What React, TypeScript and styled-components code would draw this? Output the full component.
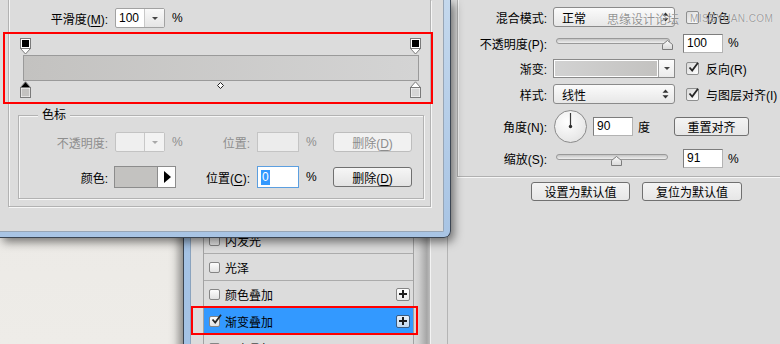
import React from "react"
import styled, { createGlobalStyle } from "styled-components"

const GlobalStyle = createGlobalStyle`
  html, body {
    margin: 0;
    padding: 0;
  }
  body {
    font-family: "Liberation Sans", "Noto Sans CJK SC", sans-serif;
    font-size: 12px;
    color: #000;
  }
  * {
    box-sizing: border-box;
  }
`

const styleItems = [
  { name: "样式" },
  { name: "混合选项:默认" },
  { name: "斜面和浮雕", box: true },
  { name: "等高线", box: true },
  { name: "纹理", box: true },
  { name: "描边", box: true, plus: true },
  { name: "内阴影", box: true, plus: true },
  { name: "内发光", box: true },
  { name: "光泽", box: true },
  { name: "颜色叠加", box: true, plus: true },
  { name: "渐变叠加", box: true, plus: true, checked: true, active: true },
  { name: "图案叠加", box: true },
  { name: "外发光", box: true },
  { name: "投影", box: true, plus: true },
]

const opacityStops = [{ at: 0 }, { at: 1 }]
const colorStops = [
  { at: 0, color: "#c3c2c0", selected: true },
  { at: 1, color: "#d6d6d6", selected: false },
]

const CheckGlyph = () => (
  <svg width="13" height="13" viewBox="0 0 13 13">
    <path d="M2.5 6.5 L5.2 9.6 L11 1.8" fill="none" stroke="#262626" strokeWidth="1.8" />
  </svg>
)

const PlusGlyph = () => (
  <svg width="8" height="8" viewBox="0 0 8 8">
    <path d="M4 0 V8 M0 4 H8" stroke="#1e1e1e" strokeWidth="2" />
  </svg>
)

const UpDown = () => (
  <svg width="7" height="10" viewBox="0 0 7 10">
    <path d="M3.5 0.5 L6.5 3.8 H0.5 Z M3.5 9.5 L6.5 6.2 H0.5 Z" fill="#333" />
  </svg>
)

const SliderThumb = ({ left }: { left: number }) => (
  <Thumb style={{ left }} width="11" height="10" viewBox="0 0 11 10">
    <defs>
      <linearGradient id="thumbFill" x1="0" y1="0" x2="0" y2="1">
        <stop offset="0" stopColor="#fafafa" />
        <stop offset="1" stopColor="#d8d8d8" />
      </linearGradient>
    </defs>
    <path d="M0.5 9.5 V4.5 L5.5 0.5 L10.5 4.5 V9.5 Z" fill="url(#thumbFill)" stroke="#7c7c7c" />
  </Thumb>
)

const AngleDial = () => (
  <svg width="33" height="33" viewBox="0 0 33 33">
    <defs>
      <radialGradient id="dialFill" cx="0.4" cy="0.35" r="0.7">
        <stop offset="0" stopColor="#ffffff" />
        <stop offset="1" stopColor="#e4e4e4" />
      </radialGradient>
    </defs>
    <circle cx="16.5" cy="16.5" r="16" fill="url(#dialFill)" stroke="#8a8a8a" />
    <path d="M16.5 16.5 V3" stroke="#3a3a3a" strokeWidth="1.2" />
    <circle cx="16.5" cy="16.5" r="1.7" fill="#2e2e2e" />
  </svg>
)

export default function App() {
  return (
    <>
      <GlobalStyle />
      <Desktop>
        <BackWindow>
          <BackContent>
            <StyleColumn>
              <StyleList>
                {styleItems.map(item => (
                  <StyleItem key={item.name} $active={item.active}>
                    {item.box && <ListCheck>{item.checked && <CheckGlyph />}</ListCheck>}
                    <span>{item.name}</span>
                    {item.plus && (
                      <PlusButton $active={item.active}>
                        <PlusGlyph />
                      </PlusButton>
                    )}
                  </StyleItem>
                ))}
              </StyleList>
              <Splitter />
            </StyleColumn>

            <RightPane>
              <SettingsGroup>
                <SettingsRow $h={20}>
                  <SetLabel>混合模式:</SetLabel>
                  <Select $ml={6}>
                    <span>正常</span>
                    <UpDown />
                  </Select>
                  <CheckItem $ml={11}>
                    <CheckBox />
                    <span>仿色</span>
                  </CheckItem>
                </SettingsRow>

                <SettingsRow $h={20}>
                  <SetLabel>不透明度(P):</SetLabel>
                  <Slider $ml={9} $w={114}>
                    <SliderThumb left={105} />
                  </Slider>
                  <NumberInput $ml={13}>100</NumberInput>
                  <UnitText $ml={5}>%</UnitText>
                </SettingsRow>

                <SettingsRow $h={19}>
                  <SetLabel>渐变:</SetLabel>
                  <GradientPick>
                    <GradientSwatch />
                    <DropPart />
                  </GradientPick>
                  <CheckItem $ml={11}>
                    <CheckBox>
                      <CheckGlyph />
                    </CheckBox>
                    <span>反向(R)</span>
                  </CheckItem>
                </SettingsRow>

                <SettingsRow $h={20}>
                  <SetLabel>样式:</SetLabel>
                  <Select $ml={6}>
                    <span>线性</span>
                    <UpDown />
                  </Select>
                  <CheckItem $ml={11}>
                    <CheckBox>
                      <CheckGlyph />
                    </CheckBox>
                    <span>与图层对齐(I)</span>
                  </CheckItem>
                </SettingsRow>

                <SettingsRow $h={32}>
                  <SetLabel>角度(N):</SetLabel>
                  <DialBox>
                    <AngleDial />
                  </DialBox>
                  <NumberInput $ml={6}>90</NumberInput>
                  <UnitText $ml={5}>度</UnitText>
                  <PanelButton $ml={24} $w={75}>
                    重置对齐
                  </PanelButton>
                </SettingsRow>

                <SettingsRow $h={21}>
                  <SetLabel>缩放(S):</SetLabel>
                  <Slider $ml={9} $w={112}>
                    <SliderThumb left={54} />
                  </Slider>
                  <NumberInput $ml={15}>91</NumberInput>
                  <UnitText $ml={5}>%</UnitText>
                </SettingsRow>
              </SettingsGroup>

              <ButtonsRow>
                <PanelButton $w={99}>设置为默认值</PanelButton>
                <PanelButton $w={100}>复位为默认值</PanelButton>
              </ButtonsRow>
            </RightPane>
          </BackContent>
        </BackWindow>

        <FrontFrame>
          <DialogBody>
            <EtchedFrame>
              <SmoothRow>
                <SmoothLabel>
                  平滑度(<u>M</u>):
                </SmoothLabel>
                <Combo>
                  <ComboValue>100</ComboValue>
                  <ComboArrow />
                </Combo>
                <FieldUnit>%</FieldUnit>
              </SmoothRow>

              <GradientEditor>
                <StopRow>
                  {opacityStops.map(s => (
                    <StopMark key={s.at} style={{ left: s.at * 390 - 3 }} width="11" height="17" viewBox="0 0 11 17">
                      <path d="M0.5 10.5 L5.5 16 L10.5 10.5 Z" fill="#fff" stroke="#7a7a7a" />
                      <rect x="0.5" y="0.5" width="10" height="10" fill="#fff" stroke="#7a7a7a" />
                      <rect x="2" y="2" width="7" height="7" fill="#000" />
                    </StopMark>
                  ))}
                </StopRow>
                <GradientBar />
                <StopRow>
                  {colorStops.map(s => (
                    <StopMark key={s.at} style={{ left: s.at * 390 - 3 }} width="11" height="17" viewBox="0 0 11 17">
                      <path d="M0.5 6.5 L5.5 0.8 L10.5 6.5 Z" fill={s.selected ? "#000" : "#fff"} stroke="#7a7a7a" />
                      <rect x="0.5" y="6.5" width="10" height="10" fill="#fff" stroke="#7a7a7a" />
                      <rect x="1.5" y="7.5" width="8" height="8" fill={s.color} />
                    </StopMark>
                  ))}
                  <StopMark style={{ left: 194, top: 1 }} width="7" height="7" viewBox="0 0 7 7">
                    <path d="M3.5 0.5 L6.5 3.5 L3.5 6.5 L0.5 3.5 Z" fill="#fff" stroke="#222" />
                  </StopMark>
                </StopRow>
              </GradientEditor>

              <StopsGroup>
                <GroupTitle>色标</GroupTitle>
                <StopsGrid>
                  <FieldLabel $dim>不透明度:</FieldLabel>
                  <ComboCell>
                    <Combo $disabled>
                      <ComboValue />
                      <ComboArrow $disabled />
                    </Combo>
                    <FieldUnit $dim>%</FieldUnit>
                  </ComboCell>
                  <FieldLabel $dim>位置:</FieldLabel>
                  <TextField $disabled />
                  <FieldUnit $dim>%</FieldUnit>
                  <DialogButton $disabled>
                    删除(<u>D</u>)
                  </DialogButton>

                  <FieldLabel>颜色:</FieldLabel>
                  <ColorPicker>
                    <ColorSwatch />
                    <ColorArrow />
                  </ColorPicker>
                  <FieldLabel>
                    位置(<u>C</u>):
                  </FieldLabel>
                  <TextField $focused>
                    <Selection>0</Selection>
                  </TextField>
                  <FieldUnit>%</FieldUnit>
                  <DialogButton>
                    删除(<u>D</u>)
                  </DialogButton>
                </StopsGrid>
              </StopsGroup>
            </EtchedFrame>
          </DialogBody>
        </FrontFrame>

        <Watermark>
          <span>思缘设计论坛</span>
          <WatermarkUrl>MISSYUAN.COM</WatermarkUrl>
        </Watermark>

        <RedMark style={{ left: 3, top: 32, width: 430, height: 72 }} />
        <RedMark style={{ left: 191, top: 306, width: 227, height: 29 }} />
      </Desktop>
    </>
  )
}

const Desktop = styled.div`
  position: relative;
  width: 780px;
  height: 344px;
  overflow: hidden;
  background: linear-gradient(180deg, #e9e7e3, #eeece8);
`

/* ---------- layer style window (behind) ---------- */

const BackWindow = styled.div`
  position: absolute;
  left: 183px;
  top: 0;
  width: 640px;
  height: 360px;
  display: flex;
  padding-left: 6px;
  border-left: 1px solid #3a4450;
  background: linear-gradient(90deg, #a4c2e4, #c6daef);
  box-shadow: -4px 0 9px rgba(0, 0, 0, 0.45);
`

const BackContent = styled.div`
  flex: 1;
  display: flex;
  background: #dcdcdc;
  border-left: 1px solid #8aa3be;
`

const StyleColumn = styled.div`
  width: 257px;
  flex: none;
  display: flex;
  align-items: stretch;
  padding-left: 12px;
  border-right: 1px solid #b4b4b4;
`

const StyleList = styled.div`
  width: 211px;
  flex: none;
  align-self: flex-start;
  margin-top: 37px;
  border-left: 1px solid #a2a2a2;
  border-right: 1px solid #a2a2a2;
`

const StyleItem = styled.div<{ $active?: boolean }>`
  height: 27px;
  display: flex;
  align-items: center;
  gap: 5px;
  padding: 0 3px 0 5px;
  border-top: 1px solid #ababab;
  background: ${p => (p.$active ? "#3399ff" : "transparent")};
  white-space: nowrap;
`

const ListCheck = styled.span`
  width: 11px;
  height: 11px;
  flex: none;
  display: flex;
  align-items: center;
  justify-content: center;
  border: 1px solid #858585;
  border-radius: 2px;
  background: linear-gradient(#fdfdfd, #e2e2e2);

  svg {
    flex: none;
    margin: -3px -3px 0 0;
  }
`

const PlusButton = styled.span<{ $active?: boolean }>`
  width: 14px;
  height: 13px;
  margin-left: auto;
  display: flex;
  align-items: center;
  justify-content: center;
  border: 1px solid ${p => (p.$active ? "#3c5c80" : "#848484")};
  border-radius: 2px;
  background: ${p => (p.$active ? "linear-gradient(#e6f0fa, #c4d9ef)" : "linear-gradient(#ffffff, #eaeaea)")};
`

const Splitter = styled.div`
  width: 17px;
  flex: none;
  border-right: 1px solid #f3f3f3;
  background: linear-gradient(90deg, #dadada 0%, #cfcfcf 30%, #a6a6a6 80%, #bdbdbd 100%);
`

const RightPane = styled.div`
  flex: 1;
  display: flex;
  flex-direction: column;
  padding-left: 9px;
`

const SettingsGroup = styled.div`
  display: flex;
  flex-direction: column;
  gap: 6px;
  padding: 7px 0 7px 0;
  border-left: 1px solid #b0b0b0;
  border-bottom: 1px solid #b0b0b0;
  box-shadow: inset 1px 0 0 #f6f6f6, 0 1px 0 #f6f6f6;
`

const SettingsRow = styled.div<{ $h: number }>`
  height: ${p => p.$h}px;
  display: flex;
  align-items: center;
  white-space: nowrap;
`

const SetLabel = styled.span`
  width: 89px;
  flex: none;
  text-align: right;
`

const Select = styled.div<{ $ml: number }>`
  width: 122px;
  height: 20px;
  flex: none;
  margin-left: ${p => p.$ml}px;
  display: flex;
  align-items: center;
  justify-content: space-between;
  padding: 0 5px 0 8px;
  border: 1px solid #8a8a8a;
  border-radius: 3px;
  background: linear-gradient(#fbfbfb, #e7e7e7);
`

const CheckItem = styled.label<{ $ml: number }>`
  margin-left: ${p => p.$ml}px;
  display: flex;
  align-items: center;
  gap: 7px;
`

const CheckBox = styled.span`
  width: 13px;
  height: 13px;
  flex: none;
  display: flex;
  align-items: center;
  justify-content: center;
  border: 1px solid #8e8f8f;
  border-radius: 2px;
  background: linear-gradient(135deg, #d9d9d9, #ffffff);

  svg {
    flex: none;
    margin: -2px -2px 0 0;
  }
`

const Slider = styled.div<{ $ml: number; $w: number }>`
  position: relative;
  width: ${p => p.$w}px;
  height: 6px;
  flex: none;
  margin: -4px 0 0 ${p => p.$ml}px;
  border: 1px solid #999999;
  border-radius: 3px;
  background: linear-gradient(#c4c4c4, #efefef);
`

const Thumb = styled.svg`
  position: absolute;
  top: 1px;
  display: block;
`

const NumberInput = styled.div<{ $ml: number }>`
  width: 40px;
  height: 19px;
  flex: none;
  margin-left: ${p => p.$ml}px;
  padding-left: 3px;
  line-height: 17px;
  border: 1px solid #7d7d7d;
  border-bottom-color: #b3b3b3;
  border-right-color: #b3b3b3;
  background: #fff;
`

const UnitText = styled.span<{ $ml: number }>`
  margin-left: ${p => p.$ml}px;
`

const GradientPick = styled.div`
  width: 122px;
  height: 19px;
  flex: none;
  margin-left: 6px;
  display: flex;
  border: 1px solid #8a8a8a;
  background: #fff;
`

const GradientSwatch = styled.div`
  flex: 1;
  margin: 1px;
  background: linear-gradient(90deg, #d2d2d2, #c3c2c0);
`

const DropPart = styled.div`
  width: 16px;
  display: flex;
  align-items: center;
  justify-content: center;
  border-left: 1px solid #a3a3a3;
  background: linear-gradient(#fdfdfd, #ebebeb);

  &::after {
    content: "";
    border-left: 3px solid transparent;
    border-right: 3px solid transparent;
    border-top: 3px solid #444;
  }
`

const DialBox = styled.div`
  width: 33px;
  height: 33px;
  flex: none;
  margin-left: 7px;

  svg {
    display: block;
  }
`

const PanelButton = styled.button<{ $ml?: number; $w: number }>`
  width: ${p => p.$w}px;
  height: 19px;
  flex: none;
  margin-left: ${p => p.$ml ?? 0}px;
  padding: 0;
  font: inherit;
  color: #000;
  border: 1px solid #707070;
  border-radius: 3px;
  background: linear-gradient(#f4f4f4, #e6e6e6);
`

const ButtonsRow = styled.div`
  display: flex;
  gap: 12px;
  padding: 5px 0 0 74px;
`

/* ---------- gradient editor dialog (front) ---------- */

const FrontFrame = styled.div`
  position: absolute;
  left: 0;
  top: 0;
  z-index: 2;
  width: 451px;
  height: 238px;
  padding: 0 6px 5px 0;
  border-right: 1px solid #3b4552;
  border-bottom: 1px solid #3b4552;
  border-bottom-right-radius: 7px;
  background: linear-gradient(180deg, #c4d8ed, #a8c4e4);
  box-shadow: 3px 4px 10px rgba(0, 0, 0, 0.5);
`

const DialogBody = styled.div`
  height: 100%;
  padding-left: 8px;
  background: #dcdcdc;
  border-right: 1px solid #97a5b5;
  border-bottom: 1px solid #97a5b5;
  border-bottom-right-radius: 2px;
`

const EtchedFrame = styled.div`
  width: 423px;
  padding: 8px 0 7px 0;
  border: 1px solid #b2b2b2;
  border-top: none;
  box-shadow: inset 1px 0 0 #f6f6f6, 1px 1px 0 #f6f6f6;
`

const SmoothRow = styled.div`
  height: 20px;
  display: flex;
  align-items: center;
  gap: 7px;
  padding-left: 19px;
`

const FieldLabel = styled.span<{ $dim?: boolean }>`
  text-align: right;
  white-space: nowrap;
  color: ${p => (p.$dim ? "#8e8e8e" : "#000")};

  u {
    text-decoration-thickness: 1px;
    text-underline-offset: 2px;
  }
`

const SmoothLabel = styled(FieldLabel)`
  width: 80px;
  flex: none;
`

const FieldUnit = styled.span<{ $dim?: boolean }>`
  color: ${p => (p.$dim ? "#8e8e8e" : "#000")};
`

const Combo = styled.div<{ $disabled?: boolean }>`
  width: 50px;
  height: 20px;
  flex: none;
  display: flex;
  border: 1px solid ${p => (p.$disabled ? "#c3c3c3" : "#a2a2a2")};
  border-radius: 2px;
  background: ${p => (p.$disabled ? "#efefef" : "#fff")};
`

const ComboValue = styled.span`
  width: 28px;
  padding-left: 3px;
  line-height: 18px;
`

const ComboArrow = styled.span<{ $disabled?: boolean }>`
  flex: 1;
  display: flex;
  align-items: center;
  justify-content: center;
  border-left: 1px solid #c8c8c8;
  background: ${p => (p.$disabled ? "#f2f2f2" : "linear-gradient(#f9f9f9, #e5e5e5)")};

  &::after {
    content: "";
    border-left: 3px solid transparent;
    border-right: 3px solid transparent;
    border-top: 3px solid ${p => (p.$disabled ? "#a8a8a8" : "#444")};
  }
`

const GradientEditor = styled.div`
  position: relative;
  width: 396px;
  margin: 10px 0 0 14px;
  display: flex;
  flex-direction: column;
`

const StopRow = styled.div`
  position: relative;
  height: 17px;
`

const StopMark = styled.svg`
  position: absolute;
  top: 0;
  display: block;
`

const GradientBar = styled.div`
  height: 26px;
  border: 1px solid #9a9a9a;
  background: linear-gradient(90deg, #c3c2c0, #d4d4d4);
`

const StopsGroup = styled.div`
  position: relative;
  width: 406px;
  margin: 17px 0 0 9px;
  padding: 16px 0 10px 9px;
  border: 1px solid #b2b2b2;
  box-shadow: inset 1px 1px 0 #f6f6f6, 1px 1px 0 #f6f6f6;
`

const GroupTitle = styled.span`
  position: absolute;
  left: 19px;
  top: -9px;
  padding: 0 4px;
  line-height: 16px;
  background: #dcdcdc;
`

const StopsGrid = styled.div`
  display: grid;
  grid-template-columns: 80px 61px 67px 42px 20px 79px;
  column-gap: 7px;
  row-gap: 14px;
  align-items: center;
  white-space: nowrap;
`

const ComboCell = styled.div`
  display: flex;
  align-items: center;
  gap: 7px;
`

const TextField = styled.div<{ $disabled?: boolean; $focused?: boolean }>`
  width: 42px;
  height: ${p => (p.$focused ? 22 : 20)}px;
  display: flex;
  align-items: center;
  padding-left: 3px;
  border: 1px solid ${p => (p.$disabled ? "#c4c4c4" : p.$focused ? "#5c9fe0" : "#8a8a8a")};
  background: ${p => (p.$disabled ? "#ececec" : "#fff")};
`

const Selection = styled.span`
  padding: 0 1px;
  line-height: 15px;
  color: #fff;
  background: #3399ff;
`

const DialogButton = styled.button<{ $disabled?: boolean }>`
  width: 79px;
  height: 20px;
  padding: 0;
  font: inherit;
  color: ${p => (p.$disabled ? "#8c8c8c" : "#000")};
  border: 1px solid ${p => (p.$disabled ? "#bdbdbd" : "#707070")};
  border-radius: 3px;
  background: ${p => (p.$disabled ? "#f1f1f1" : "linear-gradient(#f6f6f6, #e3e3e3)")};

  u {
    text-underline-offset: 2px;
  }
`

const ColorPicker = styled.div`
  height: 22px;
  margin-left: -1px;
  display: flex;
`

const ColorSwatch = styled.div`
  width: 44px;
  border: 1px solid #8c8c8c;
  background: #c3c2c0;
`

const ColorArrow = styled.div`
  width: 18px;
  display: flex;
  align-items: center;
  justify-content: center;
  border: 1px solid #8c8c8c;
  border-left: none;
  background: #fdfdfd;

  &::after {
    content: "";
    margin-left: 2px;
    border-top: 6px solid transparent;
    border-bottom: 6px solid transparent;
    border-left: 7px solid #000;
  }
`

/* ---------- overlays ---------- */

const Watermark = styled.div`
  position: absolute;
  left: 607px;
  top: 10px;
  z-index: 3;
  display: flex;
  align-items: center;
  gap: 11px;
  font-size: 12px;
  color: rgba(110, 110, 110, 0.75);
  text-shadow: 0 0 1px #fff;
  white-space: nowrap;
  pointer-events: none;
`

const WatermarkUrl = styled.span`
  font-size: 10px;
  letter-spacing: 0.4px;
  color: rgba(120, 120, 120, 0.7);
`

const RedMark = styled.div`
  position: absolute;
  z-index: 4;
  border: 2px solid #ff0000;
  pointer-events: none;
`
